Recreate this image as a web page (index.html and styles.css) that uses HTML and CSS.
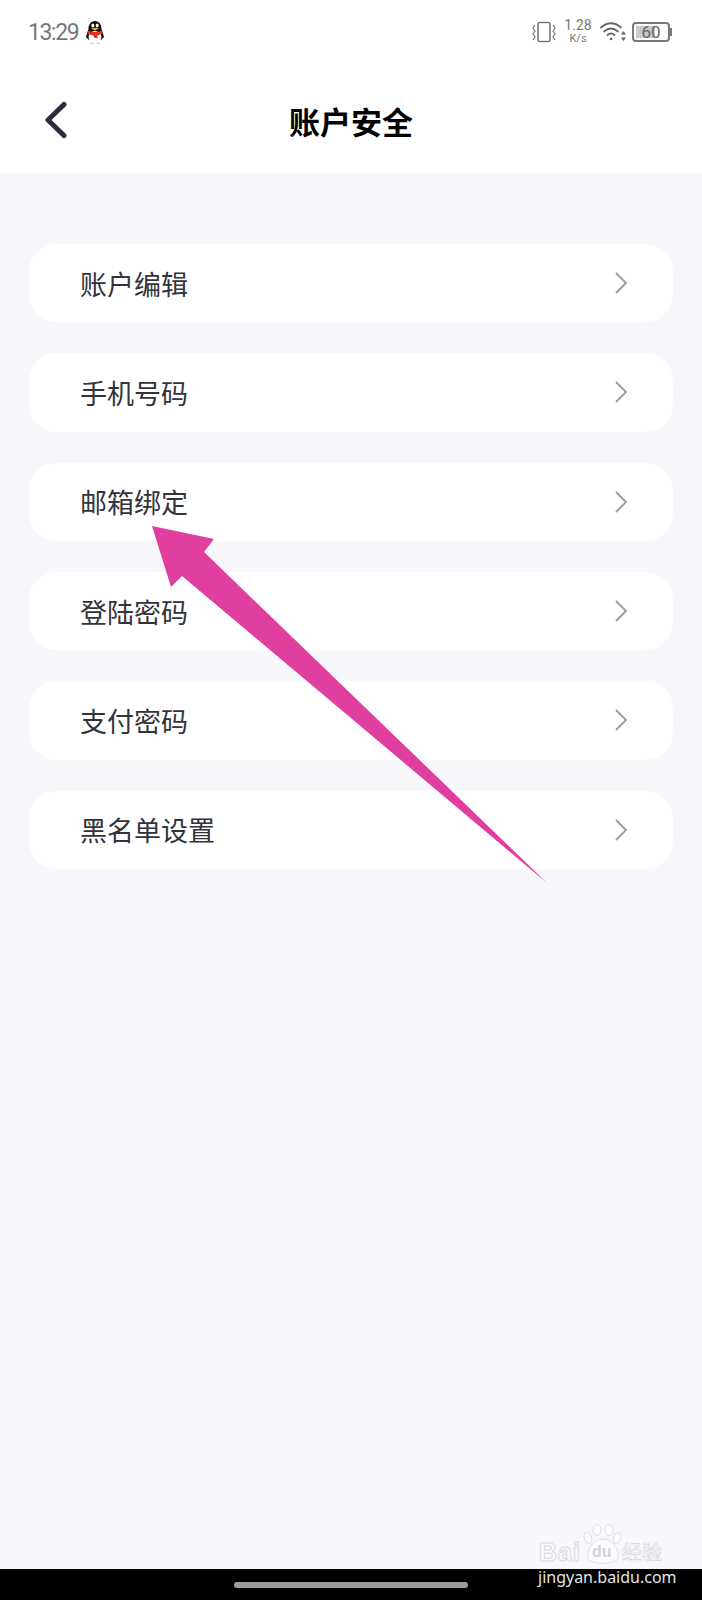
FILE: index.html
```html
<!DOCTYPE html>
<html lang="zh-CN">
<head>
    <meta charset="UTF-8">
    <meta name="viewport" content="width=device-width, initial-scale=1.0">
    <title>账户安全</title>
    <link rel="stylesheet" href="styles.css">
</head>
<body>
    <div class="top">
        <div class="status">
            <div class="status-left">
                <span class="time">13:29</span>
                <svg class="qq" viewBox="0 0 20 24">
                    <path d="M10 1C14.500 1 16.500 5 16.500 9L19 17 16 20H4L1 17 3.500 9C3.500 5 5.500 1 10 1Z" fill="#0b0b0b"/>
                    <ellipse cx="10" cy="17" rx="6.500" ry="6" fill="#fff"/>
                    <path d="M3 10.500Q10 13.500 17 10.500L17.500 13.500Q13 15 12.500 15.500L12.500 18.500 9 17.500 8.500 15.500Q5 15 2.500 13.500Z" fill="#e0312c"/>
                    <ellipse cx="7.800" cy="5.500" rx="1.500" ry="2" fill="#fff"/>
                    <ellipse cx="12.200" cy="5.500" rx="1.500" ry="2" fill="#fff"/>
                    <path d="M6 8.500Q10 7 14 8.500L10 10.500Z" fill="#f0a920"/>
                    <path d="M4 23.500Q7 21.500 9 23.500ZM11 23.500Q13 21.500 16 23.500Z" fill="#e9b03a"/>
                </svg>
            </div>
            <div class="status-right">
                <svg class="vib" viewBox="0 0 24 24" fill="none" stroke="#77777b">
                    <rect x="6" y="2.500" width="12" height="19" rx="2" stroke-width="1.600"/>
                    <path d="M3 5 1 8 3 11 1 14 3 17 1 20M21 5 23 8 21 11 23 14 21 17 23 20" stroke-width="1.200"/>
                </svg>
                <div class="speed">
                    <span class="speed-num">1.28</span>
                    <span class="speed-unit">K/s</span>
                </div>
                <svg class="wifi" viewBox="0 0 26 20" fill="none" stroke="#66666a" stroke-linecap="round">
                    <path d="M1 5.500Q11-3 21 5.500" stroke-width="1.700"/>
                    <path d="M4 9.500Q11 3.500 18 9.500" stroke-width="1.700"/>
                    <path d="M7.500 13Q11 10 14.500 13" stroke-width="1.700"/>
                    <circle cx="11" cy="17" r="1.300" fill="#66666a" stroke="none"/>
                    <path d="M23.500 9 26 12.500H21ZM23.500 19 26 15.500H21Z" fill="#66666a" stroke="none"/>
                </svg>
                <div class="battery">
                    <div class="battery-body">
                        <div class="battery-fill"></div>
                        <span class="battery-num">60</span>
                    </div>
                    <div class="battery-tip"></div>
                </div>
            </div>
        </div>
        <div class="nav">
            <svg class="back" viewBox="0 0 22 38" fill="none" stroke="#2b2b3a" stroke-width="5" stroke-linecap="round" stroke-linejoin="round">
                <path d="M19 3.500 3 19 19 34.500"/>
            </svg>
            <h1 class="title">账户安全</h1>
        </div>
    </div>

    <div class="list">
        <div class="row"><span>账户编辑</span><svg class="more" viewBox="0 0 12 22" fill="none" stroke="#9a9a9e" stroke-width="1.800"><path d="M1 1 11 11 1 21"/></svg></div>
        <div class="row"><span>手机号码</span><svg class="more" viewBox="0 0 12 22" fill="none" stroke="#9a9a9e" stroke-width="1.800"><path d="M1 1 11 11 1 21"/></svg></div>
        <div class="row"><span>邮箱绑定</span><svg class="more" viewBox="0 0 12 22" fill="none" stroke="#9a9a9e" stroke-width="1.800"><path d="M1 1 11 11 1 21"/></svg></div>
        <div class="row"><span>登陆密码</span><svg class="more" viewBox="0 0 12 22" fill="none" stroke="#9a9a9e" stroke-width="1.800"><path d="M1 1 11 11 1 21"/></svg></div>
        <div class="row"><span>支付密码</span><svg class="more" viewBox="0 0 12 22" fill="none" stroke="#9a9a9e" stroke-width="1.800"><path d="M1 1 11 11 1 21"/></svg></div>
        <div class="row"><span>黑名单设置</span><svg class="more" viewBox="0 0 12 22" fill="none" stroke="#9a9a9e" stroke-width="1.800"><path d="M1 1 11 11 1 21"/></svg></div>
    </div>

    <div class="homebar"><div class="pill"></div></div>

    <!-- annotation drawn over the screenshot -->
    <svg class="arrow" viewBox="0 0 702 1600">
        <path d="M152 526 214 539 204 552 547 883 182 576 171 587Z" fill="#e03fa0"/>
    </svg>

    <div class="mark">
        <svg class="paw" viewBox="0 0 42 40" fill="#fcfcfe" stroke="#dedee3" stroke-width="1">
            <ellipse cx="7" cy="14" rx="3.500" ry="5.500" transform="rotate(-20 7 14)"/>
            <ellipse cx="16" cy="6" rx="4" ry="5.500"/>
            <ellipse cx="28" cy="6" rx="4" ry="5.500"/>
            <ellipse cx="36" cy="14" rx="3.500" ry="5.500" transform="rotate(20 36 14)"/>
            <path d="M22 15C32 15 39 27 37 34 35 41 9 41 7 34 5 27 12 15 22 15Z"/>
        </svg>
        <div class="mark-bai">Bai</div>
        <div class="mark-du">du</div>
        <div class="mark-cn">经验</div>
        <div class="mark-url">jingyan.baidu.com</div>
    </div>
</body>
</html>
```

FILE: styles.css
```css
* {
    box-sizing: border-box;
}
body {
    margin: 0;
    min-height: 1600px;
    display: flex;
    flex-direction: column;
    position: relative;
    background: #f7f7fc;
    font-family: "Noto Sans CJK SC", "Noto Sans", sans-serif;
}
.top {
    height: 173px;
    background: #fff;
}
.status {
    height: 64px;
    padding: 0 30px 0 28px;
    display: flex;
    justify-content: space-between;
    align-items: center;
}
.status-left {
    display: flex;
    align-items: center;
    gap: 7px;
}
.time {
    font-family: Roboto, sans-serif;
    font-size: 23px;
    letter-spacing: -1.400px;
    color: #77777b;
}
.qq {
    width: 20px;
    height: 24px;
}
.status-right {
    display: flex;
    align-items: center;
    color: #77777b;
}
.vib {
    width: 24px;
    height: 24px;
    margin-right: 9px;
}
.speed {
    width: 26px;
    display: flex;
    flex-direction: column;
    align-items: center;
    font-family: Roboto, sans-serif;
    line-height: 13px;
    margin-right: 9px;
}
.speed-num {
    font-size: 14px;
}
.speed-unit {
    font-size: 11px;
}
.wifi {
    width: 26px;
    height: 20px;
    margin-right: 6px;
}
.battery {
    display: flex;
    align-items: center;
}
.battery-body {
    width: 38px;
    height: 20px;
    border: 2px solid #77777b;
    border-radius: 4px;
    padding: 2px;
    position: relative;
}
.battery-fill {
    width: 64%;
    height: 100%;
    background: #c9c9cb;
}
.battery-num {
    position: absolute;
    top: 0;
    left: 0;
    right: 0;
    text-align: center;
    font-family: Roboto, sans-serif;
    font-size: 17px;
    line-height: 16px;
    color: #66666a;
}
.battery-tip {
    width: 2px;
    height: 8px;
    background: #77777b;
}
.nav {
    height: 109px;
    padding-left: 45px;
    position: relative;
    display: flex;
    align-items: center;
}
.back {
    width: 22px;
    height: 38px;
    margin-top: 2px;
}
.title {
    position: absolute;
    left: 0;
    right: 0;
    top: 34px;
    margin: 0;
    text-align: center;
    font-size: 31px;
    line-height: 46px;
    font-weight: 700;
    color: #000;
}
.list {
    flex: 1;
    padding: 71px 29px 0;
    display: flex;
    flex-direction: column;
    gap: 31px;
}
.row {
    height: 78.340px;
    padding: 0 46px 0 51px;
    background: #fff;
    border-radius: 27px;
    display: flex;
    justify-content: space-between;
    align-items: center;
    font-size: 27px;
    color: #33333b;
}
.more {
    width: 12px;
    height: 22px;
}
.homebar {
    height: 31px;
    background: #000;
    display: flex;
    justify-content: center;
    padding-top: 13px;
}
.pill {
    width: 234px;
    height: 6px;
    border-radius: 3px;
    background: #9c9c9c;
}
.arrow {
    position: absolute;
    top: 0;
    left: 0;
    width: 702px;
    height: 1600px;
}
.mark {
    position: absolute;
    left: 538px;
    top: 1524px;
    width: 128px;
    height: 62px;
}
.paw {
    position: absolute;
    left: 43px;
    top: 0;
    width: 42px;
    height: 40px;
}
.mark-bai {
    position: absolute;
    left: 1px;
    top: 14px;
    font-family: "Liberation Sans", sans-serif;
    font-size: 25px;
    line-height: 28px;
    font-weight: 700;
    letter-spacing: 1px;
    color: #fcfcfe;
    -webkit-text-stroke: 1px #d9d9de;
}
.mark-du {
    position: absolute;
    left: 54px;
    top: 18px;
    font-family: "Liberation Sans", sans-serif;
    font-size: 16px;
    line-height: 20px;
    font-weight: 700;
    color: #d2d2d8;
}
.mark-cn {
    position: absolute;
    left: 84px;
    top: 16px;
    font-size: 20px;
    line-height: 24px;
    color: #fcfcfe;
    -webkit-text-stroke: 0.600px #d5d5da;
}
.mark-url {
    position: absolute;
    top: 43px;
    left: 0;
    font-family: "Noto Sans", sans-serif;
    font-size: 16px;
    line-height: 20px;
    color: #e4e4e4;
    white-space: nowrap;
}
```
